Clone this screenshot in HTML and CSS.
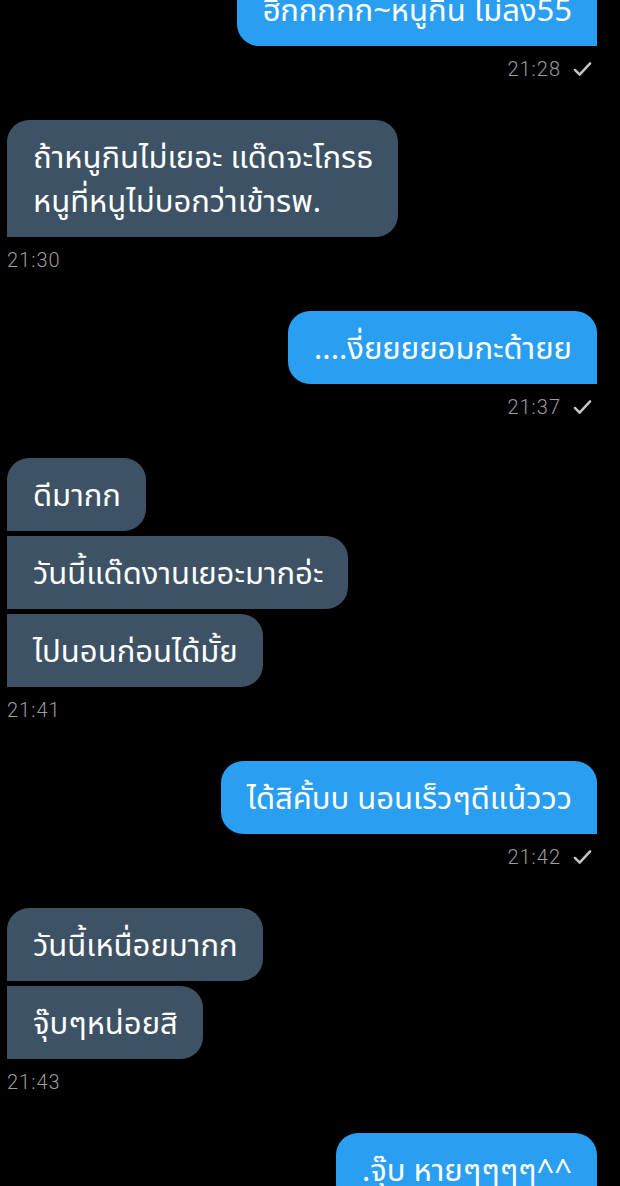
FILE: index.html
```html
<!DOCTYPE html>
<html lang="th">
<head>
<meta charset="utf-8">
<link rel="stylesheet" href="styles.css">
</head>
<body>
<div class="chat">
  <div class="msg out">
    <div class="bubble">ฮีกกกกก~หนูกิน ไม่ลง55</div>
    <div class="meta"><span class="time">21:28</span><svg class="check" viewBox="0 0 20 16"><path d="M2 9 L7 14 L18 2"/></svg></div>
  </div>

  <div class="msg in">
    <div class="bubble first last">ถ้าหนูกินไม่เยอะ แด๊ดจะโกรธ<br>หนูที่หนูไม่บอกว่าเข้ารพ.</div>
    <div class="meta"><span class="time">21:30</span></div>
  </div>

  <div class="msg out">
    <div class="bubble">....งี่ยยยยอมกะด้ายย</div>
    <div class="meta"><span class="time">21:37</span><svg class="check" viewBox="0 0 20 16"><path d="M2 9 L7 14 L18 2"/></svg></div>
  </div>

  <div class="msg in">
    <div class="bubble first">ดีมากก</div>
    <div class="bubble">วันนี้แด๊ดงานเยอะมากอ่ะ</div>
    <div class="bubble">ไปนอนก่อนได้มั้ย</div>
    <div class="meta"><span class="time">21:41</span></div>
  </div>

  <div class="msg out">
    <div class="bubble">ได้สิคั้บบ นอนเร็วๆดีแน้ววว</div>
    <div class="meta"><span class="time">21:42</span><svg class="check" viewBox="0 0 20 16"><path d="M2 9 L7 14 L18 2"/></svg></div>
  </div>

  <div class="msg in">
    <div class="bubble first">วันนี้เหนื่อยมากก</div>
    <div class="bubble">จุ๊บๆหน่อยสิ</div>
    <div class="meta"><span class="time">21:43</span></div>
  </div>

  <div class="msg out">
    <div class="bubble">.จุ๊บ หายๆๆๆๆ^^</div>
  </div>
</div>
</body>
</html>
```

FILE: styles.css
```css
html, body {
  margin: 0;
  padding: 0;
  background: #000;
}
body {
  width: 620px;
  height: 1186px;
  overflow: hidden;
  font-family: "Noto Sans", "Noto Sans Thai", "Loma", "Garuda", sans-serif;
}
.chat {
  display: flex;
  flex-direction: column;
  gap: 40px;
  margin-top: -27px;
}
.msg {
  display: flex;
  flex-direction: column;
  gap: 5px;
}
.msg.out {
  align-items: flex-end;
  padding-right: 23px;
}
.msg.in {
  align-items: flex-start;
  padding-left: 7px;
}
.bubble {
  color: #fff;
  font-size: 31px;
  line-height: 44px;
  padding: 14px 25px 15px 26px;
  white-space: nowrap;
}
.out .bubble {
  background: #2a9ef0;
  border-radius: 22px 22px 0 22px;
}
.in .bubble {
  background: #3d5264;
  border-radius: 0 22px 22px 0;
}
.in .bubble.first {
  border-top-left-radius: 22px;
}
.meta {
  display: flex;
  align-items: center;
  gap: 12px;
  margin-top: 7px;
  height: 22px;
}
.out .meta {
  margin-right: 5px;
}
.time {
  color: #9c9c9c;
  font-family: "Roboto", "Noto Sans", sans-serif;
  font-weight: 300;
  font-size: 20px;
  letter-spacing: 1px;
  line-height: 22px;
}
.check {
  width: 19px;
  height: 16px;
  fill: none;
  stroke: #c4c4c4;
  stroke-width: 2.6;
  stroke-linecap: round;
  stroke-linejoin: round;
}
```
